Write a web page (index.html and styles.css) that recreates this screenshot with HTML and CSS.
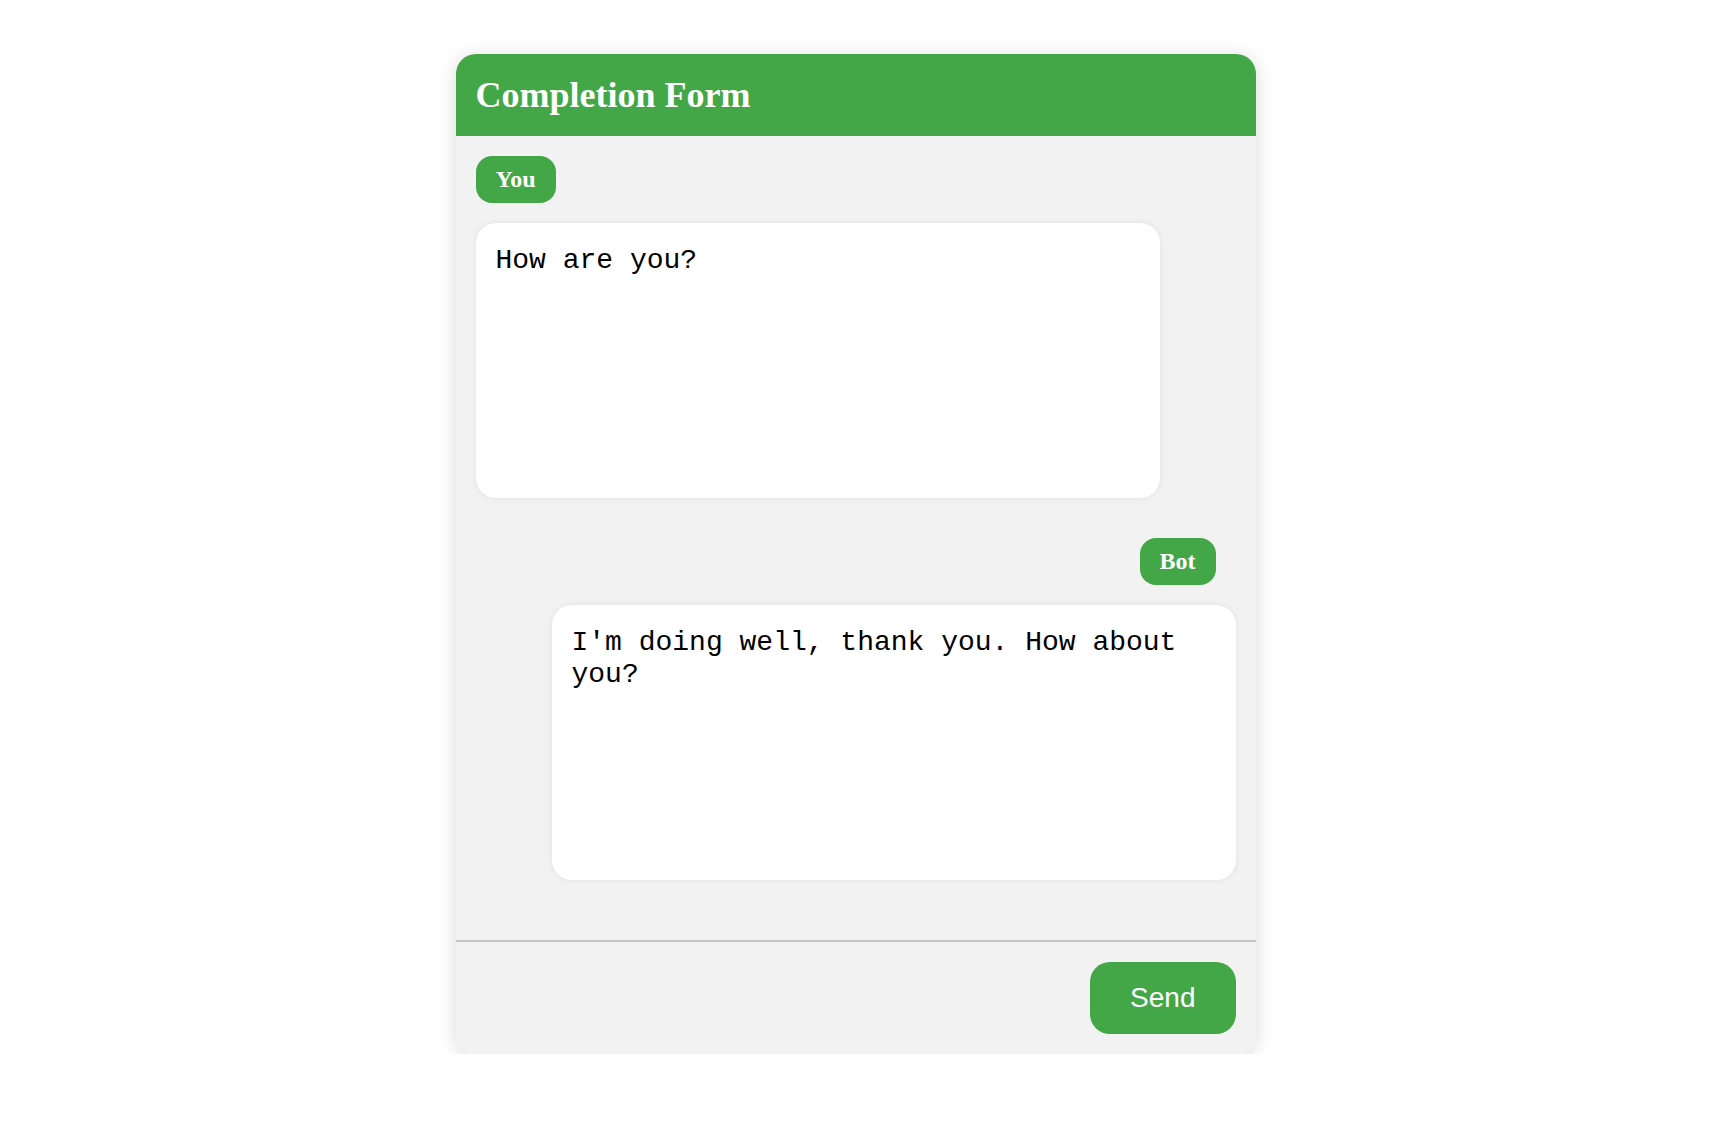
FILE: index.html
```html
<!DOCTYPE html>
<html lang="en">
<head>
<meta charset="utf-8">
<title>Completion Form</title>
<link rel="stylesheet" href="styles.css">
</head>
<body>
<div class="card">
  <div class="header"><h1 class="title">Completion Form</h1></div>
  <div class="messages">
    <div class="message user">
      <span class="badge">You</span>
      <textarea class="bubble" readonly>How are you?</textarea>
    </div>
    <div class="message bot">
      <span class="badge">Bot</span>
      <textarea class="bubble" readonly>I'm doing well, thank you. How about you?</textarea>
    </div>
  </div>
  <div class="footer">
    <button class="send" type="button">Send</button>
  </div>
</div>
</body>
</html>
```
FILE: styles.css
```css
html, body {
  margin: 0;
  background: #ffffff;
}
body {
  padding: 54px 3px 0 0;
  font-family: "Liberation Serif", "Times New Roman", serif;
}
.card {
  width: 800px;
  margin: 0 auto;
  background: #f2f2f2;
  border-radius: 20px;
  box-shadow: 0 3px 20px rgba(0, 0, 0, 0.15);
  overflow: hidden;
}
.header {
  background: #43a647;
  padding: 20px;
}
.title {
  margin: 0;
  color: #ffffff;
  font-family: "Liberation Serif", "Times New Roman", serif;
  font-size: 36px;
  font-weight: bold;
}
.messages {
  padding: 20px;
}
.message {
  display: flex;
  flex-direction: column;
  align-items: flex-start;
  gap: 20px;
  margin-bottom: 40px;
}
.message.bot {
  align-items: flex-end;
}
.badge {
  background: #43a647;
  color: #ffffff;
  font-family: "Liberation Serif", "Times New Roman", serif;
  font-size: 24px;
  font-weight: bold;
  padding: 10px 20px;
  border-radius: 16px;
}
.message.bot .badge {
  margin-right: 20px;
}
.bubble {
  display: block;
  box-sizing: border-box;
  width: 90%;
  height: 275px;
  padding: 22px 20px 20px;
  margin: 0;
  border: none;
  border-radius: 20px;
  background: #ffffff;
  color: #000000;
  font-family: "Liberation Mono", "Courier New", monospace;
  font-size: 28px;
  line-height: 32px;
  resize: none;
  outline: none;
  box-shadow: 0 0 6px rgba(0, 0, 0, 0.08);
}
.footer {
  display: flex;
  justify-content: flex-end;
  border-top: 2px solid #c5c5c5;
  padding: 20px;
}
.send {
  background: #43a647;
  color: #ffffff;
  font-family: "Liberation Sans", Arial, sans-serif;
  font-size: 28px;
  padding: 20px 40px;
  border: none;
  border-radius: 20px;
  line-height: normal;
}
```
